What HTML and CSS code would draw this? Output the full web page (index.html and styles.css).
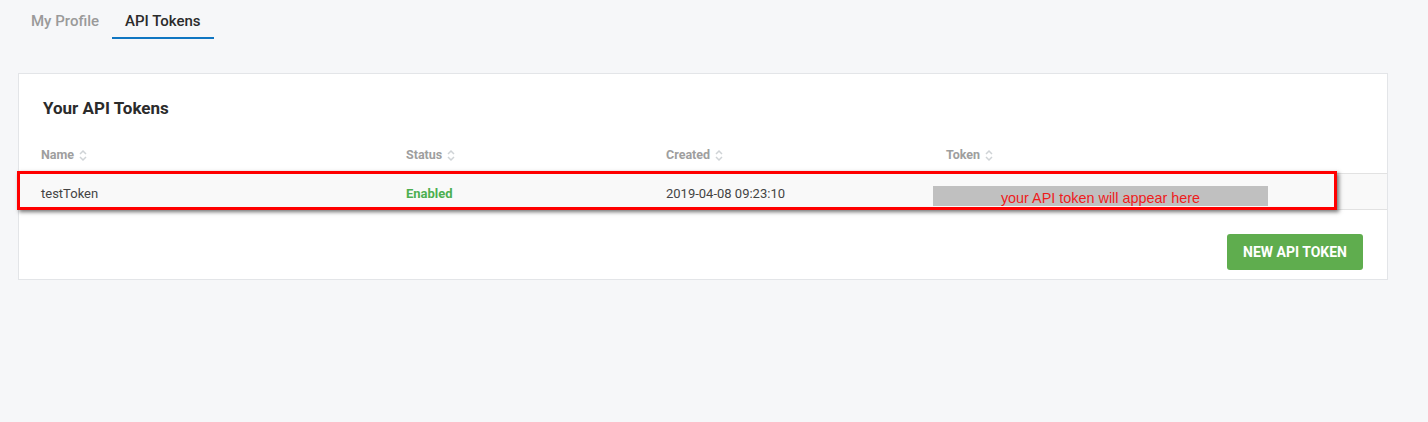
FILE: index.html
```html
<!DOCTYPE html>
<html lang="en">
<head>
<meta charset="utf-8">
<title>API Tokens</title>
<link rel="stylesheet" href="styles.css">
</head>
<body>
<nav class="tabs">
  <a class="tab">My Profile</a>
  <a class="tab active">API Tokens</a>
</nav>
<section class="card">
  <h2 class="card-title">Your API Tokens</h2>
  <div class="table">
    <div class="thead">
      <div class="th">Name <svg class="sort" viewBox="0 0 8 13" width="8" height="13"><path d="M1 5 L4 2 L7 5 M1 8 L4 11 L7 8" fill="none" stroke="#cfd3d6" stroke-width="1.5"/></svg></div>
      <div class="th">Status <svg class="sort" viewBox="0 0 8 13" width="8" height="13"><path d="M1 5 L4 2 L7 5 M1 8 L4 11 L7 8" fill="none" stroke="#cfd3d6" stroke-width="1.5"/></svg></div>
      <div class="th">Created <svg class="sort" viewBox="0 0 8 13" width="8" height="13"><path d="M1 5 L4 2 L7 5 M1 8 L4 11 L7 8" fill="none" stroke="#cfd3d6" stroke-width="1.5"/></svg></div>
      <div class="th">Token <svg class="sort" viewBox="0 0 8 13" width="8" height="13"><path d="M1 5 L4 2 L7 5 M1 8 L4 11 L7 8" fill="none" stroke="#cfd3d6" stroke-width="1.5"/></svg></div>
    </div>
    <div class="trow">
      <div class="td">testToken</div>
      <div class="td status">Enabled</div>
      <div class="td">2019-04-08 09:23:10</div>
      <div class="td"><div class="token-mask">your API token will appear here</div></div>
    </div>
  </div>
  <div class="actions">
    <button class="btn-new">NEW API TOKEN</button>
  </div>
  <div class="highlight"></div>
</section>
</body>
</html>
```
FILE: styles.css
```css
* { box-sizing: border-box; }
html, body { margin: 0; padding: 0; }
body {
  background: #f6f7f9;
  font-family: Roboto, "Liberation Sans", Arial, sans-serif;
  color: #333;
  height: 422px;
}
.tabs {
  display: flex;
  padding-left: 18px;
  height: 39px;
}
.tab {
  display: block;
  padding: 12px 13px 0;
  font-size: 15px;
  font-weight: 500;
  line-height: 18px;
  color: #9a9a9a;
  border-bottom: 2px solid transparent;
}
.tab.active {
  color: #2b2b2b;
  border-bottom-color: #1076c2;
}
.card {
  position: relative;
  margin: 34px 0 0 18px;
  width: 1370px;
  height: 207px;
  background: #fff;
  border: 1px solid #e3e5e8;
  padding-top: 24px;
}
.card-title {
  margin: 0 0 0 24px;
  font-size: 17px;
  line-height: 20px;
  font-weight: 700;
  color: #2b2b2b;
}
.thead, .trow {
  display: grid;
  grid-template-columns: 365px 260px 280px 1fr;
  padding-left: 22px;
}
.th {
  padding: 28px 0 9px;
  font-size: 12.5px;
  line-height: 18px;
  font-weight: 700;
  color: #9e9e9e;
  display: flex;
  align-items: center;
  gap: 5px;
}
.sort { display: block; }
.trow {
  background: #f9f9f9;
  border-top: 1px solid #e2e2e2;
  border-bottom: 1px solid #e2e2e2;
}
.td {
  padding: 11px 0 6px;
  font-size: 13px;
  line-height: 18px;
  color: #444;
}
.td.status {
  color: #4caf50;
  font-weight: 700;
}
.token-mask {
  margin: 1px 0 -3px -13px;
  width: 335px;
  height: 20px;
  background: #c0c0c0;
  color: #ee1c1c;
  font-family: "Liberation Sans", Arial, sans-serif;
  font-size: 14.4px;
  line-height: 24px;
  text-align: center;
}
.actions {
  display: flex;
  justify-content: flex-end;
  padding: 24px 24px 0 0;
}
.btn-new {
  height: 36px;
  width: 136px;
  border: none;
  border-radius: 3px;
  background: #5fad4e;
  color: #fff;
  font-family: Roboto, "Liberation Sans", Arial, sans-serif;
  font-size: 14px;
  font-weight: 700;
  padding: 0;
}
.highlight {
  position: absolute;
  left: -2px;
  top: 97px;
  width: 1320px;
  height: 39px;
  border: 3px solid #f00;
  box-shadow: 2px 2px 4px rgba(0, 0, 0, 0.55);
  pointer-events: none;
}
```
